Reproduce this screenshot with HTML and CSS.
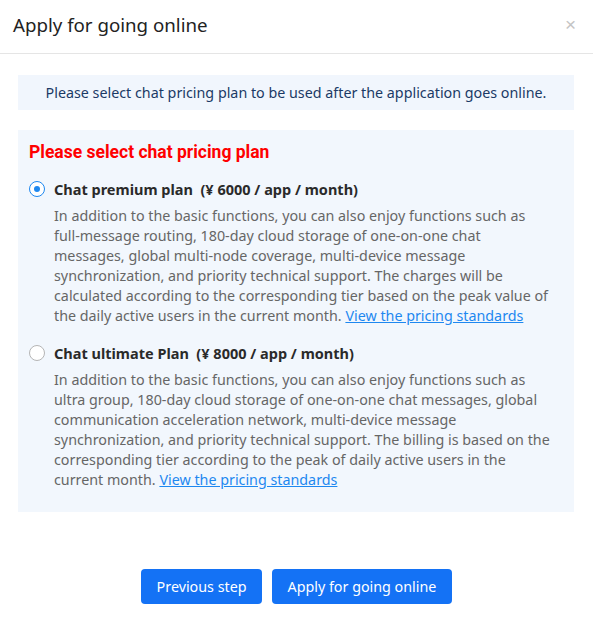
FILE: index.html
```html
<!DOCTYPE html>
<html>
<head>
<meta charset="utf-8">
<link rel="stylesheet" href="styles.css">
</head>
<body>
<div class="modal">
  <div class="header">
    <div class="title">Apply for going online</div>
    <div class="close">×</div>
  </div>
  <div class="content">
    <div class="notice">Please select chat pricing plan to be used after the application goes online.</div>
    <div class="plans">
      <div class="plans-title">Please select chat pricing plan</div>
      <div class="plan">
        <div class="plan-head"><span class="radio checked"></span><span class="plan-name">Chat premium plan&nbsp; (¥ 6000 / app / month)</span></div>
        <div class="plan-desc">In addition to the basic functions, you can also enjoy functions such as full-message routing, 180-day cloud storage of one-on-one chat messages, global multi-node coverage, multi-device message synchronization, and priority technical support. The charges will be calculated according to the corresponding tier based on the peak value of the daily active users in the current month. <a class="link">View the pricing standards</a></div>
      </div>
      <div class="plan">
        <div class="plan-head"><span class="radio"></span><span class="plan-name">Chat ultimate Plan&nbsp; (¥ 8000 / app / month)</span></div>
        <div class="plan-desc">In addition to the basic functions, you can also enjoy functions such as ultra group, 180-day cloud storage of one-on-one chat messages, global communication acceleration network, multi-device message synchronization, and priority technical support. The billing is based on the corresponding tier according to the peak of daily active users in the current month. <a class="link">View the pricing standards</a></div>
      </div>
    </div>
  </div>
  <div class="footer">
    <button class="btn">Previous step</button>
    <button class="btn">Apply for going online</button>
  </div>
</div>
</body>
</html>
```
FILE: styles.css
```css
* { box-sizing: border-box; }
html, body { margin: 0; padding: 0; background: #fff; }
body { font-family: "Noto Sans", "Open Sans", sans-serif; font-size: 14px; color: #333; }
.modal { width: 593px; height: 621px; display: flex; flex-direction: column; }
.header {
  height: 54px; border-bottom: 1px solid #e5e5e5;
  display: flex; align-items: center; justify-content: space-between;
  padding: 0 17px 4px 13px;
}
.title { font-family: "Noto Sans", sans-serif; font-size: 18.7px; color: #222; }
.close { font-family: "Liberation Sans", Arial, sans-serif; font-size: 19px; color: #c4c4c4; line-height: 1; }
.content { padding: 21px 19px 0 18px; }
.notice {
  background: #f1f6fd; height: 35px; display: flex; align-items: center; justify-content: center;
  color: #1b3a66; font-size: 14.3px;
}
.plans { background: #f2f7fd; margin-top: 20px; padding: 10px 11px 22px 11px; }
.plans-title { font-family: Roboto, "Noto Sans", sans-serif; color: #f00; font-weight: bold; font-size: 17.5px; line-height: 24px; margin-bottom: 15px; }
.plan { margin-bottom: 17px; }
.plan:last-child { margin-bottom: 0; }
.plan-head { display: flex; align-items: center; height: 20px; }
.radio {
  width: 16px; height: 16px; border-radius: 50%; border: 1px solid #b5b5b5; background: #fff;
  margin-right: 9px; flex: none; position: relative;
}
.radio.checked { border-color: #1e88f0; }
.radio.checked::after {
  content: ""; position: absolute; left: 4px; top: 4px; width: 6px; height: 6px; border-radius: 50%; background: #1e88f0;
}
.plan-name { font-weight: bold; color: #2a2a2a; font-size: 14.5px; }
.plan-desc { margin-left: 25px; margin-top: 7px; color: #666; line-height: 20px; font-size: 14.3px; width: 497px; }
.link { color: #1e88f0; text-decoration: underline; }
.footer { margin-top: auto; display: flex; justify-content: center; gap: 10px; padding-bottom: 17px; }
.btn {
  background: #1472f5; color: #fff; border: none; border-radius: 4px; height: 35px;
  font-family: "Noto Sans", sans-serif; font-size: 14.3px; padding: 0 15.5px;
}
```
